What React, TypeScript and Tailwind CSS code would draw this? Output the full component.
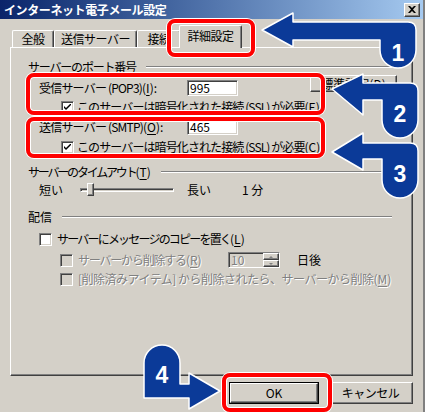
import React from 'react';

const face = 'bg-[#d4d0c8]';

// sunken 2px border used by checkboxes and edit boxes
const sunken =
  'border border-t-[#808080] border-l-[#808080] border-r-white border-b-white shadow-[inset_1px_1px_0_#404040,inset_-1px_-1px_0_#d4d0c8]';

// raised 2px border used by buttons
const raised =
  'border border-t-white border-l-white border-r-[#404040] border-b-[#404040] shadow-[inset_-1px_-1px_0_#808080]';

const Key: React.FC<{ k: string }> = ({ k }) => (
  <span className="tracking-normal">
    (<span className="underline underline-offset-2">{k}</span>)
  </span>
);

const Check: React.FC<{ checked?: boolean; disabled?: boolean }> = ({ checked, disabled }) => (
  <div className={`w-[13px] h-[13px] shrink-0 flex items-center justify-center ${sunken} ${disabled ? face : 'bg-white'}`}>
    {checked && (
      <svg width="7" height="7" viewBox="0 0 7 7">
        <path d="M0 2 L0 4 L2 6 L7 1 L7 -1 L2 4 Z" fill="#000" />
      </svg>
    )}
  </div>
);

const EditBox: React.FC<{ value: string }> = ({ value }) => (
  <div className={`w-[51px] h-[16px] bg-white ${sunken} flex items-center pl-[2px] text-black`}>{value}</div>
);

const GroupLabel: React.FC<{ children: React.ReactNode; tr: string }> = ({ children, tr }) => (
  <div className="flex items-center h-[16px] pl-[17px] pr-[20px] gap-[10px]">
    <span className={`shrink-0 ${tr}`}>{children}</span>
    <div className="flex-1 h-[2px] border-t border-t-[#808080] border-b border-b-white" />
  </div>
);

const Dim: React.FC<{ children: React.ReactNode; className?: string }> = ({ children, className = '' }) => (
  <span className={`text-[#808080] [text-shadow:1px_1px_0_#fff] ${className}`}>{children}</span>
);

const Tab: React.FC<{ label: string; active?: boolean; w: number }> = ({ label, active, w }) => (
  <div
    style={{ width: w }}
    className={`flex items-center justify-center tracking-[-0.5px] rounded-t-[2px] border-t border-l border-t-white border-l-white border-r border-r-[#404040] shadow-[inset_-1px_0_0_#808080] ${face} ${
      active ? 'h-[23px] -mx-[2px] relative z-10 pb-[3px]' : 'h-[17px] mb-[1px]'
    }`}
  >
    {label}
  </div>
);

const RedBox: React.FC<{ className: string }> = ({ className }) => (
  <div
    className={`absolute border-[4px] border-[#ff0000] rounded-[8px] shadow-[0_0_0_1px_#fff,inset_0_0_0_1px_#fff] pointer-events-none ${className}`}
  />
);

const Arrows = () => (
  <svg className="absolute inset-0 pointer-events-none" width="425" height="412" viewBox="0 0 425 412">
    <g fill="#0b3a98" stroke="#fff" strokeWidth="1.5" strokeLinejoin="round">
      <path d="M262,30 L293,13 L293,22 L408,22 Q416,22 416,30 L416,50 A18,18 0 0 1 380,50 L380,40 L293,40 L293,47 Z" />
      <path d="M332,89 L363,74 L363,83 L410,83 Q418,83 418,91 L418,120 A18,18 0 0 1 382,120 L382,100 L363,100 L363,115 Z" />
      <path d="M332,152 L363,133 L363,143 L410,143 Q418,143 418,151 L418,180 A18,18 0 0 1 382,180 L382,159 L363,159 L363,170 Z" />
      <path d="M144,398 L144,363 A18,18 0 0 1 180,363 L180,384 L189,384 L189,373 L220,391 L189,409 L189,398 Z" />
    </g>
    <g fill="#fff" fontFamily="'Liberation Sans', Arial, sans-serif" fontWeight="700" fontSize="23" textAnchor="middle">
      <text x="398" y="61">1</text>
      <text x="400" y="122">2</text>
      <text x="400" y="182">3</text>
      <text x="162" y="383">4</text>
    </g>
  </svg>
);

export default function App() {
  return (
    <div
      className={`relative w-[425px] h-[412px] overflow-hidden ${face} text-[12px] leading-none text-black [font-family:'Noto_Sans_CJK_JP','Liberation_Sans',sans-serif] border-r-2 border-r-[#808080]`}
    >
      {/* title bar */}
      <div className="h-[19px] flex items-center justify-between pl-[4px] pr-[3px] bg-gradient-to-r from-[#0a246a] to-[#a6caf0]">
        <span className="text-white font-bold tracking-[-0.4px]">インターネット電子メール設定</span>
        <div className={`w-[16px] h-[14px] ${face} ${raised} flex items-center justify-center`}>
          <svg width="8" height="7" viewBox="0 0 8 7">
            <path d="M0 0 L2 0 L4 2 L6 0 L8 0 L5 3.5 L8 7 L6 7 L4 5 L2 7 L0 7 L3 3.5 Z" fill="#000" />
          </svg>
        </div>
      </div>

      <div className="px-[10px] pt-[6px]">
        {/* tabs */}
        <div className="flex items-end h-[23px] pl-[2px]">
          <Tab label="全般" w={42} />
          <Tab label="送信サーバー" w={83} />
          <Tab label="接続" w={44} />
          <Tab label="詳細設定" active w={63} />
        </div>

        {/* tab page */}
        <div className="-mt-[1px] h-[329px] border-t border-l border-t-white border-l-white border-r border-b border-r-[#404040] border-b-[#404040] shadow-[inset_-1px_-1px_0_#808080] flex flex-col">
          <div className="mt-[11px]">
            <GroupLabel tr="tracking-[-1.2px]">サーバーのポート番号</GroupLabel>
          </div>

          <div className="mt-[5px] h-[16px] flex items-center pl-[28px]">
            <span className="w-[148px] shrink-0 tracking-[-0.8px]">
              受信サーバー (POP3)<Key k="I" />:
            </span>
            <EditBox value="995" />
            <div className={`ml-[72px] self-start -mt-[5px] w-[87px] h-[17px] ${raised} flex items-center justify-center`}>
              標準設定<Key k="D" />
            </div>
          </div>

          <div className="mt-[3px] h-[16px] flex items-center pl-[50px] gap-[3px]">
            <Check checked />
            <span className="tracking-[-0.9px]">
              このサーバーは暗号化された接続 (SSL) が必要<Key k="E" />
            </span>
          </div>

          <div className="mt-[4px] h-[16px] flex items-center pl-[28px]">
            <span className="w-[148px] shrink-0 tracking-[-0.8px]">
              送信サーバー (SMTP)<Key k="O" />:
            </span>
            <EditBox value="465" />
          </div>

          <div className="mt-[4px] h-[16px] flex items-center pl-[50px] gap-[3px]">
            <Check checked />
            <span className="tracking-[-0.9px]">
              このサーバーは暗号化された接続 (SSL) が必要<Key k="C" />
            </span>
          </div>

          <div className="mt-[9px]">
            <GroupLabel tr="tracking-[-2.2px]">
              サーバーのタイムアウト<Key k="T" />
            </GroupLabel>
          </div>

          <div className="mt-[2px] h-[16px] flex items-center pl-[28px]">
            <span className="w-[41px] shrink-0">短い</span>
            <div className="relative w-[94px] h-[16px] flex items-center">
              <div className="w-full h-[4px] border-t border-l border-t-[#808080] border-l-[#808080] border-b border-r border-b-white border-r-white shadow-[inset_1px_1px_0_#404040]" />
              <div className={`absolute left-[7px] top-[1px] w-[7px] h-[13px] ${face} ${raised}`} />
            </div>
            <span className="ml-[13px] w-[55px] shrink-0">長い</span>
            <span>1 分</span>
          </div>

          <div className="mt-[11px]">
            <GroupLabel tr="tracking-normal">配信</GroupLabel>
          </div>

          <div className="mt-[6px] h-[16px] flex items-center pl-[28px] gap-[5px]">
            <Check />
            <span className="tracking-[-1.8px]">
              サーバーにメッセージのコピーを置く<Key k="L" />
            </span>
          </div>

          <div className="mt-[5px] h-[16px] flex items-center pl-[49px]">
            <Check disabled />
            <Dim className="ml-[5px] w-[150px] shrink-0 tracking-[-1.2px]">
              サーバーから削除する<Key k="R" />
            </Dim>
            <div className={`w-[52px] h-[16px] ${face} ${sunken} flex items-center justify-between pl-[2px]`}>
              <Dim>10</Dim>
              <div className="flex flex-col w-[16px] h-[14px]">
                <div className={`h-[7px] ${face} ${raised} flex items-center justify-center`}>
                  <div className="w-0 h-0 border-l-[2px] border-r-[2px] border-b-[2px] border-l-transparent border-r-transparent border-b-[#808080]" />
                </div>
                <div className={`h-[7px] ${face} ${raised} flex items-center justify-center`}>
                  <div className="w-0 h-0 border-l-[2px] border-r-[2px] border-t-[2px] border-l-transparent border-r-transparent border-t-[#808080]" />
                </div>
              </div>
            </div>
            <span className="ml-[17px]">日後</span>
          </div>

          <div className="mt-[3px] h-[16px] flex items-center pl-[49px]">
            <Check disabled />
            <Dim className="ml-[5px] tracking-[-0.5px]">
              [削除済みアイテム] から削除されたら、サーバーから削除<Key k="M" />
            </Dim>
          </div>
        </div>

        {/* dialog buttons */}
        <div className="mt-[6px] flex justify-end gap-[9px]">
          <div className="w-[90px] h-[22px] border border-black">
            <div className={`w-full h-full ${raised} flex items-center justify-center`}>OK</div>
          </div>
          <div className={`w-[85px] h-[22px] ${raised} flex items-center justify-center tracking-[-0.5px]`}>キャンセル</div>
        </div>
      </div>

      <RedBox className="left-[167px] top-[19px] w-[88px] h-[38px]" />
      <RedBox className="left-[26px] top-[73px] w-[299px] h-[42px]" />
      <RedBox className="left-[26px] top-[117px] w-[299px] h-[41px]" />
      <RedBox className="left-[222px] top-[373px] w-[110px] h-[39px]" />

      <Arrows />
    </div>
  );
}
